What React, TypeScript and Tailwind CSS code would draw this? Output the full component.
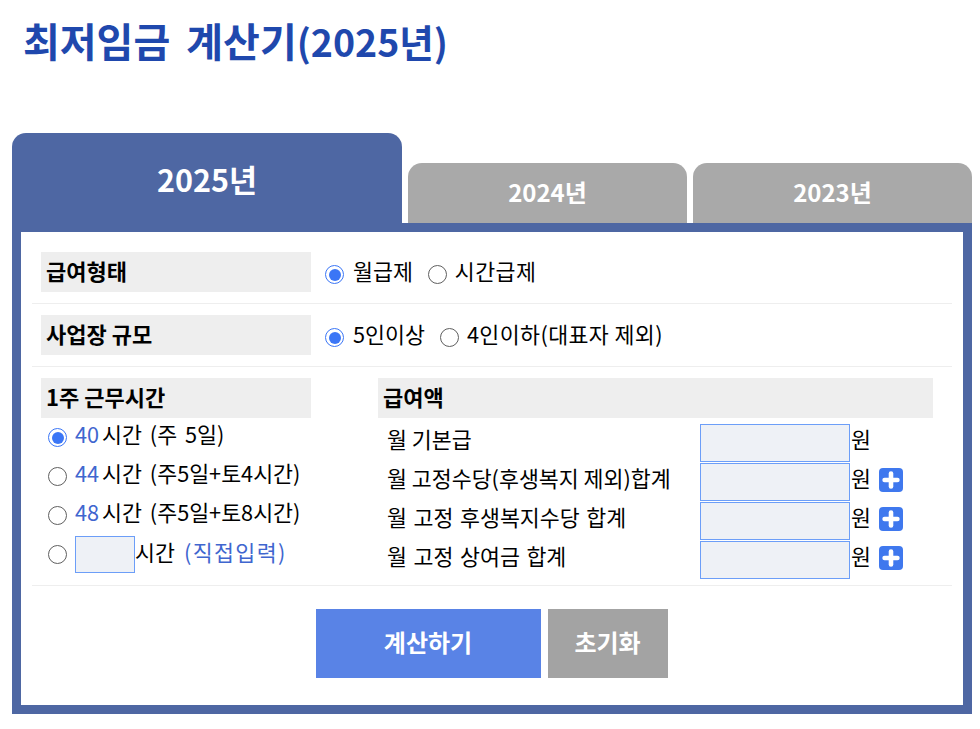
import { Plus } from 'lucide-react';

const FONT = "font-['Noto_Sans_CJK_KR','Noto_Sans',sans-serif]";

function Radio({ checked = false }: { checked?: boolean }) {
  return (
    <span
      className={`flex h-[19px] w-[19px] shrink-0 items-center justify-center rounded-full border-[1.5px] bg-white ${
        checked ? 'border-[#3b76f6]' : 'border-[#5f5f5f]'
      }`}
    >
      {checked && <span className="h-[12px] w-[12px] rounded-full bg-[#3b76f6]" />}
    </span>
  );
}

function Label({ children }: { children: string }) {
  return (
    <div className="flex h-10 w-[270px] items-center bg-[#eeeeee] pb-[4px] pl-[5px] text-[22px] font-bold text-black">
      {children}
    </div>
  );
}

function Choice({ first, second }: { first: string; second: string }) {
  return (
    <div className="ml-[14px] flex h-10 items-center">
      <span className="mt-[5px]">
        <Radio checked />
      </span>
      <span className="mb-[2px] ml-[9px] whitespace-nowrap">{first}</span>
      <span className="mt-[5px] ml-[15px]">
        <Radio />
      </span>
      <span className="mb-[2px] ml-[8px] whitespace-nowrap tracking-[0.4px]">{second}</span>
    </div>
  );
}

function Hours({ value, note, checked }: { value: string; note: string; checked?: boolean }) {
  return (
    <div className="flex h-[39px] items-center pl-[7px]">
      <Radio checked={checked} />
      <span className="mb-[8px] ml-[8px] text-[#3f66cf]">{value}</span>
      <span className="mb-[8px] ml-[3px] whitespace-nowrap [word-spacing:3px]">시간 {note}</span>
    </div>
  );
}

function Pay({ label, plus = true, spaced = false }: { label: string; plus?: boolean; spaced?: boolean }) {
  return (
    <div className="flex h-[39px] items-center">
      <span className={`mb-[8px] w-[322px] whitespace-nowrap pl-[9px] ${spaced ? '[word-spacing:1.7px]' : ''}`}>
        {label}
      </span>
      <span className="h-[38px] w-[150px] border border-[#6c9ef8] bg-[#eef1f6]" />
      <span className="mb-[8px] ml-[1px]">원</span>
      {plus && (
        <span className="mb-[4px] ml-[8px] flex h-6 w-6 items-center justify-center rounded-[4px] bg-[#3f78ee]">
          <Plus className="h-[22px] w-[22px] text-white" strokeWidth={5} />
        </span>
      )}
    </div>
  );
}

export default function App() {
  return (
    <div className={`${FONT} h-[729px] w-[980px] overflow-hidden bg-white text-[21.7px] leading-none text-black`}>
      <h1 className="ml-[23px] h-[133px] pt-[16px] text-[40px] leading-[48px] font-bold whitespace-nowrap text-[#1f48ad] [word-spacing:7px]">
        최저임금 계산기<span className="text-[37.5px]">(2025년)</span>
      </h1>

      <div className="ml-3 flex h-[90px] items-end">
        <div className="flex h-[90px] w-[390px] items-center justify-center rounded-t-[14px] bg-[#4e67a3] pt-[2px] text-[30.5px] font-bold text-white">
          2025년
        </div>
        <div className="ml-[6px] flex h-[60px] w-[279px] items-center justify-center rounded-t-[14px] bg-[#a9a9a9] pb-[2px] text-[24px] font-bold text-white">
          2024년
        </div>
        <div className="ml-[6px] flex h-[60px] w-[279px] items-center justify-center rounded-t-[14px] bg-[#a9a9a9] pb-[2px] text-[24px] font-bold text-white">
          2023년
        </div>
      </div>

      <div className="ml-3 h-[491px] w-[960px] border-[9px] border-[#4e67a3] bg-white px-[11px] pt-5">
        <div className="flex h-[52px] items-start border-b border-[#eeeeee] pl-[9px]">
          <Label>급여형태</Label>
          <Choice first="월급제" second="시간급제" />
        </div>

        <div className="flex h-[63px] items-start border-b border-[#eeeeee] pt-[11px] pl-[9px]">
          <Label>사업장 규모</Label>
          <Choice first="5인이상" second="4인이하(대표자 제외)" />
        </div>

        <div className="flex h-[219px] items-start border-b border-[#eeeeee] pt-[11px] pl-[9px]">
          <div className="w-[337px]">
            <Label>1주 근무시간</Label>
            <Hours value="40" note="(주 5일)" checked />
            <Hours value="44" note="(주5일+토4시간)" />
            <Hours value="48" note="(주5일+토8시간)" />
            <div className="flex h-[39px] items-center pl-[7px]">
              <Radio />
              <span className="ml-[8px] h-[37px] w-[60px] border border-[#6c9ef8] bg-[#eef1f6]" />
              <span className="mb-[6px] whitespace-nowrap">시간</span>
              <span className="mb-[6px] ml-[9px] whitespace-nowrap tracking-[1.4px] text-[#3f66cf]">(직접입력)</span>
            </div>
          </div>
          <div className="w-[555px]">
            <div className="flex h-10 items-center bg-[#eeeeee] pb-[4px] pl-[5px] text-[22px] font-bold">급여액</div>
            <div className="pt-[5px]">
              <Pay label="월 기본급" plus={false} />
              <Pay label="월 고정수당(후생복지 제외)합계" />
              <Pay label="월 고정 후생복지수당 합계" spaced />
              <Pay label="월 고정 상여금 합계" spaced />
            </div>
          </div>
        </div>

        <div className="flex justify-center gap-[7px] pt-[23px] pr-[1px]">
          <button
            type="button"
            className="h-[69px] w-[225px] bg-[#5983e6] pb-[4px] text-[24px] font-bold text-white"
          >
            계산하기
          </button>
          <button
            type="button"
            className="h-[69px] w-[120px] bg-[#a3a3a3] pb-[4px] text-[24px] font-bold text-white"
          >
            초기화
          </button>
        </div>
      </div>
    </div>
  );
}
